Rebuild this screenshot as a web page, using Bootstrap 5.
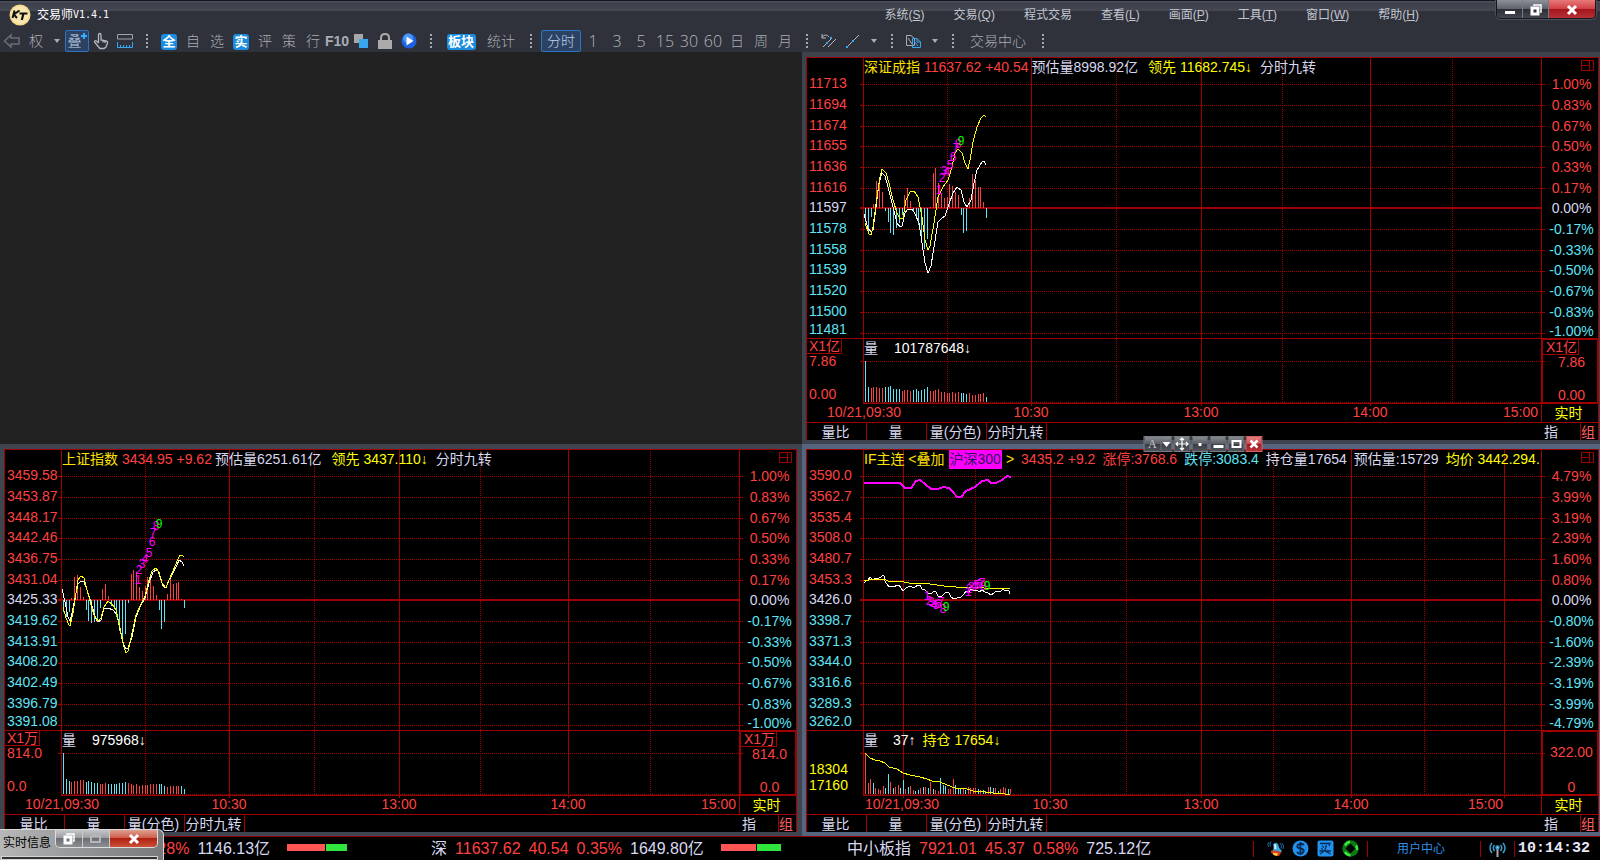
<!DOCTYPE html>
<html lang="zh-CN">
<head>
<meta charset="utf-8">
<meta name="viewport" content="width=device-width, initial-scale=1">
<title>交易师V1.4.1</title>
<link href="https://cdn.jsdelivr.net/npm/bootstrap@5.3.0/dist/css/bootstrap.min.css" rel="stylesheet">
<style>
:root{--line:#a00000;--up:#ff4040;--down:#5fe3f5;--pale:#d8d8f0;--gold:#ffe000;--lemon:#ffff00}
body{background:#222;color:var(--pale);font:14px/16px "Liberation Sans","Noto Sans CJK SC",sans-serif;overflow:hidden}
button{background:none;border:0;padding:0;color:inherit;font:inherit}
a{color:inherit;text-decoration:none}
.c-up{color:var(--up)}.c-down{color:var(--down)}.c-pale{color:var(--pale)}.c-gold{color:var(--gold)}.c-lemon{color:var(--lemon)}.c-white{color:#fff}

/* title bar and tool bar */
.app-head{background:linear-gradient(#14161e 0 1px,#4a4e58 1px 2px,#3e414b 3px,#454852 11px,#2f323b 11px);height:52px}
.title-row{height:30px;font-size:12px}
.title-row .ver{font:10px/16px "DejaVu Sans Mono",monospace}
.logo-box{padding-left:9px;gap:6px}
.menu-list{gap:29px;margin-right:77px;color:#c2c6d0}
.win-btns{margin-right:4px;border:1px solid #15171c;border-top:0;border-radius:0 0 5px 5px;box-shadow:0 0 0 1px #4c505a;overflow:hidden;height:19px}
.win-btns button{width:26px;height:19px;background:linear-gradient(#8d919a,#5c606a 48%,#2c2f37 50%,#454953);border-right:1px solid #777b85}
.win-btns .shut{width:46px;background:linear-gradient(#e8797a,#cf3d42 48%,#a5161c 50%,#b8343a);border:0}
.tool-row{height:22px;color:#a9adb5}
.tool-row button{width:24px;height:22px;font-weight:300}
.tool-row .wide{width:40px}.tool-row .caret{width:17px}
.tool-row .center-link{width:70px}
.tool-row .num{font:300 16px/22px "Open Sans","Liberation Sans",sans-serif;color:#b4b7be}
.tool-row .f-ten{font:700 14px/22px "Liberation Sans Narrow","Liberation Sans",sans-serif}
.tool-row .on{border:1px solid #2c74c4;background:#2b4265;border-radius:2px;color:#c6d4e6}
.tool-row .overlay-btn{padding-right:5px;text-align:center}
.chip{display:inline-block;background:#1b8de0;color:#fff;border-radius:3px;font-weight:700;line-height:16px;width:16px;font-size:13px}
.chip.two{width:29px}
.grip{width:20px;height:14px;background:repeating-linear-gradient(#a5a8b0 0 2px,transparent 2px 4px) center/2px 14px no-repeat}
.tool-row svg,.win-btns svg{display:block;margin:auto}
.tri{width:0;height:0;margin:auto;border:3px solid transparent;border-top:4px solid #a9adb5;border-bottom:0}

/* chart windows */
.desk{display:grid;grid-template-columns:minmax(0,802fr) minmax(0,798fr)}
.pane{height:392px;background:#000;border-style:solid;border-color:#40444e;border-width:5px 1px 4px 4px;box-shadow:inset 0 1px #000}
.pane.idle{border-color:#3d424d}
.pane.left-side{border-right-width:5px}
.pane.live{border-color:#56657f}
.sheet{border:1px solid var(--line);border-bottom:0;height:383px}
.scale-l,.scale-r{width:57px}
.marks{height:281px;border-bottom:1px solid var(--line)}
.marks div{line-height:21px;height:21px}
.marks div:nth-child(3n){height:20px}
.scale-l .marks{border-right:1px solid var(--line);padding:15px 0 0 2px}
.scale-l .marks div:last-child{line-height:16px;height:16px}
.scale-r .marks{padding:16px 0 0 3px;text-align:center}
.scale-r .marks div:last-child{line-height:18px;height:17px}
.vols{height:65px}
.vols div{line-height:14px}
.scale-l .vols{border-right:1px solid var(--line);padding-bottom:3px}
.scale-l .vols div{padding-left:2px}
.scale-l .vols.oi{justify-content:end!important}
.scale-l .vols.oi div{line-height:16px}
.scale-r .vols{border:1px solid var(--line);border-width:1px 1px 2px;text-align:center}
.scale-r .vols div:not(.unit){padding-left:3px}
.scale-r .vols.oi{padding-top:13px}
.unit{align-self:start;border:1px solid var(--line);border-width:0 1px 1px 0;height:15px;padding:0 1px 0 3px;white-space:nowrap}
.scale-r .marks,.scale-r .vols,.live-tag{border-left:1px solid var(--line)}
.scale-r .vols{border-left-width:2px}
.live-tag{height:18px;line-height:18px;text-align:center;padding-right:3px}
.plot{min-width:0}
.plot svg{display:block;width:100%;height:364px;overflow:visible}
.plot svg text{font-size:14px}
.plot svg .turn{font-size:12px}
.legend-line{left:0;right:0;overflow:hidden;white-space:nowrap;line-height:18px;height:19px}
.legend-top{top:0}.legend-vol{top:281px}
.legend-gap{gap:7px}
.est{margin-left:3px}.lead-val{margin-left:10px}
.tag-300{background:#f0f;color:#301060;padding:0 1px}
.tabs-row{border-top:1px solid var(--line);height:18px}
.tabs-row button{width:60px;line-height:16px;border-right:1px solid var(--line);white-space:nowrap;padding-right:2px}
.tabs-row .zhi{width:36px;border:0}
.tabs-row .zu{width:18px;border:0;border-left:1px solid var(--line);color:#ff6060;padding-right:4px}
.corner{right:4px;top:2px}
.float-bar{top:-13px;height:16px;gap:1px;z-index:3}
.float-bar button{width:17px;height:16px;background:linear-gradient(#85888e,#5c5f66 48%,#3a3d44 50%,#50535a);border:1px solid #777b82}
.float-bar .aa{width:29px;color:#c8cacf;font:12px/12px "Liberation Serif",serif}
.float-bar .shut{background:linear-gradient(#e87c80,#cf4a50 48%,#a1141c 50%,#b8343a);border-color:#c86468}
.float-bar svg{display:block;margin:auto}

/* status bar and message window */
.foot{height:24px;background:#000;border-top:1px solid #8c0000;font-size:16px;white-space:nowrap}
.quote{flex:0 0 26%;gap:8px;padding-left:15px}
.quote.last{flex:1 1 0}
.balance{height:7px;margin-left:9px;margin-bottom:3px;gap:1px}
.balance i{display:block;height:7px}
.r-up{background:#ff5454}.r-down{background:#2fe63c}
.cell{border-left:1px solid var(--line);height:16px}
.tray{width:114px;padding-left:13px}
.user-link{width:113px;padding-right:6px;font-size:12px;color:#2f8fe8}
.signal{width:34px}
.clock{font:bold 15px/16px "Liberation Mono",monospace;color:#e8e8f8;width:86px;padding-left:3px}
.msg-win{left:0;bottom:0;width:164px;height:31px;z-index:5;background:linear-gradient(100deg,#b8b8b8,#909294 55%,#77797c);border:1px solid #d8d8d8;border-left:0;border-bottom:0;border-radius:0 6px 0 0;color:#000;font-size:12px}
.msg-title{padding:5px 0 0 3px}
.msg-win .inner{left:1px;right:5px;bottom:0;height:4px;border:1px solid #d6d6d6;background:#333}
.msg-btns{border:1px solid #ddd;border-top:0;border-radius:0 0 5px 5px;overflow:hidden;height:18px;margin-right:5px}
.msg-btns button{width:27px;height:17px;background:linear-gradient(#c4c6c8,#9a9c9f 48%,#6b6e72 50%,#8b8e92);border-right:1px solid #ccc}
.msg-btns .shut{width:47px;background:linear-gradient(#e0a090,#cc5a48 48%,#b02010 50%,#cc5038);border:0}
.msg-btns svg{display:block;margin:auto}
</style>
</head>
<body>
<header class="app-head">
  <div class="title-row d-flex">
    <div class="logo-box d-flex align-items-center c-white">
      <svg width="22" height="22" viewBox="0 0 22 22"><circle cx="11" cy="11" r="10.5" fill="#f5d98c"/><circle cx="11" cy="11" r="9" fill="#f9e6ae"/><g fill="none" stroke="#111" stroke-width="2"><path d="M5.500 6.500 3.500 14M10.500 6.500 4.800 10.500 8 14"/><path d="M10.500 9.500H18.500M14.500 9.500 12.800 16" stroke-width="2.200"/></g></svg>
      <span class="d-flex align-items-center">交易师<span class="ver">V1.4.1</span></span>
    </div>
    <nav class="menu-list d-flex ms-auto align-items-center">
      <a href="#">系统(<u>S</u>)</a><a href="#">交易(<u>Q</u>)</a><a href="#">程式交易</a><a href="#">查看(<u>L</u>)</a><a href="#">画面(<u>P</u>)</a><a href="#">工具(<u>T</u>)</a><a href="#">窗口(<u>W</u>)</a><a href="#">帮助(<u>H</u>)</a>
    </nav>
    <div class="win-btns d-flex">
      <button type="button" aria-label="最小化"><svg width="14" height="14"><rect x="2" y="8" width="10" height="3" fill="#fff"/></svg></button>
      <button type="button" aria-label="还原"><svg width="14" height="14" fill="none" stroke="#fff" stroke-width="1.500"><path d="M5 3V2H12V9H11"/><rect x="3" y="5" width="6" height="6" stroke-width="3"/></svg></button>
      <button type="button" class="shut" aria-label="关闭"><svg width="14" height="12" stroke="#fff" stroke-width="3"><path d="M3 2 11 10M11 2 3 10"/></svg></button>
    </div>
  </div>
  <div class="tool-row d-flex align-items-center">
    <button type="button" aria-label="后退"><svg width="18" height="16" fill="none" stroke="#6a6e78" stroke-width="1.500"><path d="M1.500 8 8 2V5H16V11H8V14Z"/></svg></button>
    <button type="button">权</button>
    <button type="button" class="caret" aria-label="更多"><div class="tri"></div></button>
    <button type="button" class="on overlay-btn position-relative" aria-label="叠加">叠<svg class="position-absolute top-0 end-0" width="8" height="9" stroke="#35b0ff" stroke-width="2"><path d="M4 2V8M1 5H7"/></svg></button>
    <button type="button" aria-label="手型"><svg width="18" height="18" fill="none" stroke="#b4b8c0" stroke-width="1.300"><path d="M6.500 11V3Q6.500 1.500 7.700 1.500T9 3V8L14 9Q16 9.500 15.500 11L14 15 12 16.500H8L5 13 2.500 10Q2.500 8 4.500 9L6.500 11M11 8.500V10.500M13 9V11"/></svg></button>
    <button type="button" aria-label="标尺"><svg width="18" height="16" fill="none"><path d="M1.500 1.500H16.500V6H1.500Z" stroke="#a0a4ac"/><path d="M1.500 9V14.500H16.500V9M4.500 12V14M7.500 12V14M10.500 12V14M13.500 12V14" stroke="#35a8f0"/></svg></button>
    <div class="grip"></div>
    <button type="button"><span class="chip">全</span></button>
    <button type="button">自</button>
    <button type="button">选</button>
    <button type="button"><span class="chip">实</span></button>
    <button type="button">评</button>
    <button type="button">策</button>
    <button type="button">行</button>
    <button type="button" class="f-ten">F10</button>
    <button type="button" aria-label="窗口"><svg width="16" height="16"><path d="M1 1H10V10H1Z" fill="#a8a8a8"/><path d="M6 6H15V15H6Z" fill="#3aa6ee"/></svg></button>
    <button type="button" aria-label="锁定"><svg width="16" height="18"><path d="M4 9V6Q4 2 8 2T12 6V9" fill="none" stroke="#aaa" stroke-width="2"/><rect x="1" y="8" width="14" height="9" fill="#aaa"/></svg></button>
    <button type="button" aria-label="播放"><svg width="16" height="16"><circle cx="8" cy="8" r="7.500" fill="#1c62e0"/><circle cx="7" cy="5.500" r="5" fill="#4a94f4"/><path d="M5.500 3.500 12.500 8 5.500 12.500Z" fill="#fff"/></svg></button>
    <div class="grip"></div>
    <button type="button" class="wide"><span class="chip two">板块</span></button>
    <button type="button" class="wide">统计</button>
    <div class="grip"></div>
    <button type="button" class="wide on">分时</button>
    <button type="button" class="num">1</button><button type="button" class="num">3</button><button type="button" class="num">5</button><button type="button" class="num">15</button><button type="button" class="num">30</button><button type="button" class="num">60</button>
    <button type="button">日</button><button type="button">周</button><button type="button">月</button>
    <div class="grip"></div>
    <button type="button" aria-label="平行线"><svg width="18" height="16" fill="none" stroke="#b4b8c0"><path d="M2 1V5H6M2 4Q6 0 9 4M3 14 11 6M8 14 16 6"/><path d="M10 4H12V6H10ZM6 9H8V11H6Z" fill="#35a8f0" stroke="none"/></svg></button>
    <button type="button" aria-label="画线"><svg width="18" height="16"><path d="M3 14 15 2" stroke="#b4b8c0"/><path d="M2 13H4V15H2ZM8 7H10V9H8Z" fill="#35a8f0"/></svg></button>
    <button type="button" class="caret" aria-label="更多"><div class="tri"></div></button>
    <div class="grip"></div>
    <button type="button" aria-label="复制"><svg width="18" height="16" fill="none"><path d="M1.500 2.500H6L9.500 5.500V12.500H1.500ZM3 5 7 11" stroke="#a8acb4"/><path d="M7.500 5.500H12L15.500 9V14.500H7.500ZM12 5.500V9H15.500M9 8 13 13" stroke="#35a8f0"/></svg></button>
    <button type="button" class="caret" aria-label="更多"><div class="tri"></div></button>
    <div class="grip"></div>
    <button type="button" class="center-link">交易中心</button>
    <div class="grip"></div>
  </div>
</header>

<main class="desk">
  <div></div>

  <section class="pane idle">
    <div class="sheet">
      <div class="d-flex">
        <div class="scale-l">
          <div class="marks" data-marks="11713 11694 11674 11655 11636 11616 11597 11578 11558 11539 11520 11500 11481"></div>
          <div class="vols d-flex flex-column justify-content-between c-up"><div class="unit">X1亿</div><div class="mb-auto">7.86</div><div>0.00</div></div>
        </div>
        <div class="plot flex-fill position-relative">
          <svg data-chart="sz"></svg>
          <div class="legend-line legend-top position-absolute d-flex"><span class="c-gold">深证成指</span><span class="c-up ms-1">11637.62 +40.54</span><span class="est">预估量8998.92亿</span><span class="c-lemon lead-val">领先 11682.745↓</span><span class="ms-2">分时九转</span></div>
          <div class="legend-line legend-vol position-absolute d-flex gap-3"><span>量</span><span class="c-white">101787648↓</span></div>
        </div>
        <div class="scale-r position-relative">
          <svg class="corner position-absolute" width="13" height="11" fill="none" stroke="#a00000"><path d="M.5.5H12.500V10.500H.5ZM8.500.5V10.500M.5 5.500H8.500"/></svg>
          <div class="marks" data-marks="1.00% 0.83% 0.67% 0.50% 0.33% 0.17% 0.00% -0.17% -0.33% -0.50% -0.67% -0.83% -1.00%"></div>
          <div class="vols d-flex flex-column justify-content-between c-up"><div class="unit">X1亿</div><div class="mb-auto">7.86</div><div>0.00</div></div>
          <div class="live-tag c-lemon">实时</div>
        </div>
      </div>
      <div class="tabs-row d-flex"><button type="button">量比</button><button type="button">量</button><button type="button">量(分色)</button><button type="button">分时九转</button><button type="button" class="zhi ms-auto text-start">指</button><button type="button" class="zu">组</button></div>
    </div>
  </section>

  <section class="pane left-side">
    <div class="sheet">
      <div class="d-flex">
        <div class="scale-l">
          <div class="marks" data-marks="3459.58 3453.87 3448.17 3442.46 3436.75 3431.04 3425.33 3419.62 3413.91 3408.20 3402.49 3396.79 3391.08"></div>
          <div class="vols d-flex flex-column justify-content-between c-up"><div class="unit">X1万</div><div class="mb-auto">814.0</div><div>0.0</div></div>
        </div>
        <div class="plot flex-fill position-relative">
          <svg data-chart="sh"></svg>
          <div class="legend-line legend-top position-absolute d-flex"><span class="c-gold">上证指数</span><span class="c-up ms-1">3434.95 +9.62</span><span class="est">预估量6251.61亿</span><span class="c-lemon lead-val">领先 3437.110↓</span><span class="ms-2">分时九转</span></div>
          <div class="legend-line legend-vol position-absolute d-flex gap-3"><span>量</span><span class="c-white">975968↓</span></div>
        </div>
        <div class="scale-r position-relative">
          <svg class="corner position-absolute" width="13" height="11" fill="none" stroke="#a00000"><path d="M.5.5H12.500V10.500H.5ZM8.500.5V10.500M.5 5.500H8.500"/></svg>
          <div class="marks" data-marks="1.00% 0.83% 0.67% 0.50% 0.33% 0.17% 0.00% -0.17% -0.33% -0.50% -0.67% -0.83% -1.00%"></div>
          <div class="vols d-flex flex-column justify-content-between c-up"><div class="unit">X1万</div><div class="mb-auto">814.0</div><div>0.0</div></div>
          <div class="live-tag c-lemon">实时</div>
        </div>
      </div>
      <div class="tabs-row d-flex"><button type="button">量比</button><button type="button">量</button><button type="button">量(分色)</button><button type="button">分时九转</button><button type="button" class="zhi ms-auto text-start">指</button><button type="button" class="zu">组</button></div>
    </div>
  </section>

  <section class="pane live position-relative">
    <div class="float-bar d-flex position-absolute start-50 translate-middle-x">
      <button type="button" class="aa d-flex align-items-center" aria-label="字体"><span class="ps-1 pe-1 border-end border-secondary">A</span><svg width="8" height="5"><path d="M0 0H8L4 5Z" fill="#fff"/></svg></button>
      <button type="button" aria-label="移动"><svg width="15" height="14" fill="none" stroke="#fff" stroke-width="1.200"><path d="M7.500 1V13M1.500 7H13.500M5.500 3 7.500 1 9.500 3M5.500 11 7.500 13 9.500 11M3.500 5 1.500 7 3.500 9M11.500 5 13.500 7 11.500 9"/></svg></button>
      <button type="button" aria-label="缩小"><svg width="13" height="14"><rect x="5" y="6" width="3" height="3" fill="#fff"/></svg></button>
      <button type="button" aria-label="最小化"><svg width="13" height="14"><rect x="2" y="8" width="10" height="3" fill="#fff"/></svg></button>
      <button type="button" aria-label="最大化"><svg width="13" height="14"><rect x="3" y="4" width="8" height="6" fill="none" stroke="#fff" stroke-width="2"/></svg></button>
      <button type="button" class="shut" aria-label="关闭"><svg width="13" height="14" stroke="#fff" stroke-width="2.500"><path d="M3 3.500 10 10.500M10 3.500 3 10.500"/></svg></button>
    </div>
    <div class="sheet">
      <div class="d-flex">
        <div class="scale-l">
          <div class="marks" data-marks="3590.0 3562.7 3535.4 3508.0 3480.7 3453.3 3426.0 3398.7 3371.3 3344.0 3316.6 3289.3 3262.0"></div>
          <div class="vols oi d-flex flex-column c-lemon"><div>18304</div><div>17160</div></div>
        </div>
        <div class="plot flex-fill position-relative">
          <svg data-chart="if"></svg>
          <div class="legend-line legend-top legend-gap position-absolute d-flex"><span class="d-flex gap-1"><span class="c-gold">IF主连 &lt;叠加</span><span class="tag-300">沪深300</span><span class="c-gold">&gt;</span></span><span class="c-up">3435.2 +9.2</span><span class="c-up">涨停:3768.6</span><span class="c-down">跌停:3083.4</span><span>持仓量17654</span><span>预估量:15729</span><span class="c-lemon">均价 3442.294.</span></div>
          <div class="legend-line legend-vol legend-gap position-absolute d-flex"><span>量</span><span class="c-white ms-2">37↑</span><span class="c-lemon">持仓 17654↓</span></div>
        </div>
        <div class="scale-r position-relative">
          <svg class="corner position-absolute" width="13" height="11" fill="none" stroke="#a00000"><path d="M.5.5H12.500V10.500H.5ZM8.500.5V10.500M.5 5.500H8.500"/></svg>
          <div class="marks" data-marks="4.79% 3.99% 3.19% 2.39% 1.60% 0.80% 0.00% -0.80% -1.60% -2.39% -3.19% -3.99% -4.79%"></div>
          <div class="vols oi d-flex flex-column justify-content-between c-up"><div>322.00</div><div>0</div></div>
          <div class="live-tag c-lemon">实时</div>
        </div>
      </div>
      <div class="tabs-row d-flex"><button type="button">量比</button><button type="button">量</button><button type="button">量(分色)</button><button type="button">分时九转</button><button type="button" class="zhi ms-auto text-start">指</button><button type="button" class="zu">组</button></div>
    </div>
  </section>
</main>

<footer class="foot d-flex align-items-center">
  <div class="quote d-flex align-items-center"><span>沪</span><span class="c-up">3434.95</span><span class="c-up">9.62</span><span class="c-up">0.28%</span><span>1146.13亿</span><div class="balance d-flex"><i class="r-up" style="width:38px"></i><i class="r-down" style="width:21px"></i></div></div>
  <div class="quote d-flex align-items-center"><span>深</span><span class="c-up">11637.62</span><span class="c-up">40.54</span><span class="c-up">0.35%</span><span>1649.80亿</span><div class="balance d-flex"><i class="r-up" style="width:35px"></i><i class="r-down" style="width:24px"></i></div></div>
  <div class="quote last d-flex align-items-center"><span>中小板指</span><span class="c-up">7921.01</span><span class="c-up">45.37</span><span class="c-up">0.58%</span><span>725.12亿</span></div>
  <div class="cell tray d-flex align-items-center gap-2">
    <svg width="17" height="17" class="flex-shrink-0"><path d="M5 12Q7.500 8 6 4.500Q8 1.500 11 4Q11.500 8 15 11L12 14Z" fill="#3ba8dc"/><path d="M4 10.500Q9 10 14.500 12L12 16Q7 16 4 12.500Z" fill="#d8381c"/><path d="M6 12.500 11 13.500 10 16 6.500 15Z" fill="#ffd040"/><path d="M2 2Q0 4 1.500 7M4 1.500Q2 4 3.500 6.500M13 3Q15.500 5.500 14 8.500M15 3Q17.500 6 16 9" fill="none" stroke="#1d6ea8"/><path d="M8 4.500 8.500 9" stroke="#d8f4ff" stroke-width="2"/></svg>
    <svg width="17" height="17" class="flex-shrink-0"><circle cx="8.500" cy="8.500" r="8" fill="#2290ee"/><path d="M12 5Q8.500 2.500 6 5T8.500 8.500 11 12.500 5 12M8.500 2V15" fill="none" stroke="#062a52" stroke-width="1.800"/></svg>
    <svg width="17" height="17" class="flex-shrink-0"><rect x=".5" y=".5" width="16" height="16" rx="2" fill="#2290ee"/><path d="M3 3.500H13L12 6M5 6 7 7.500M4 8.500 6 9.500M2.500 11H14M9 5Q10 10 3 14M9 11.500 13.500 14" fill="none" stroke="#062a52" stroke-width="1.300"/></svg>
    <svg width="17" height="17" class="flex-shrink-0"><circle cx="8.500" cy="8.500" r="8.200" fill="#0b7a12"/><path d="M3 5.500A6.700 6.700 0 0 1 8 1.800M14 5.500A6.700 6.700 0 0 1 15 10M3 12A6.700 6.700 0 0 0 8.500 15.200" fill="none" stroke="#3ce644" stroke-width="2.400"/><path d="M8.500 3.500 13.500 8.500 8.500 13.500 3.500 8.500Z"/></svg>
  </div>
  <a href="#" class="cell user-link text-center">用户中心</a>
  <div class="cell signal d-flex justify-content-center"><svg width="17" height="17" fill="none" stroke="#38a0cc" stroke-width="1.500"><path d="M5.500 4Q3 6.500 5.500 10M11.500 4Q14 6.500 11.500 10M3 2Q-1 7 3 12M14 2Q18 7 14 12"/><path d="M8.500 7V16" stroke="#aaa" stroke-width="2"/><circle cx="8.500" cy="6.500" r="1.500" fill="#9cd8f0"/></svg></div>
  <div class="cell clock">10:14:32</div>
</footer>

<div class="msg-win position-absolute">
  <div class="d-flex"><span class="msg-title flex-fill">实时信息</span>
    <div class="msg-btns d-flex">
      <button type="button" aria-label="还原"><svg width="14" height="14" fill="none" stroke="#fff" stroke-width="1.500"><path d="M5 3V2H12V9H11"/><rect x="3" y="5" width="6" height="6" stroke-width="3"/></svg></button>
      <button type="button" aria-label="最大化"><svg width="14" height="12"><rect x="2" y="3" width="9" height="6" fill="none" stroke="#b4b6b8" stroke-width="2"/></svg></button>
      <button type="button" class="shut" aria-label="关闭"><svg width="14" height="12" stroke="#fff" stroke-width="3"><path d="M3 2 11 10M11 2 3 10"/></svg></button>
    </div>
  </div>
  <div class="inner position-absolute"></div>
</div>

<script src="https://cdn.jsdelivr.net/npm/bootstrap@5.3.0/dist/js/bootstrap.bundle.min.js"></script>
<script>
// Scale labels: above the previous close red, the close itself pale, below it cyan.
document.querySelectorAll('[data-marks]').forEach(function (box) {
  box.innerHTML = box.dataset.marks.split(' ').map(function (t, i) {
    return '<div class="' + (i < 6 ? 'c-up' : i === 6 ? 'c-pale' : 'c-down') + '">' + t + '</div>';
  }).join('');
});

// Horizontal values are on a 677-unit trading day, vertical values in chart pixels.
var DAY = 677, BASE = 150, FLOOR = 344;
var ROWS = [26, 47, 68, 88, 109, 130, 171, 192, 213, 233, 254, 275];
var dayGrid = { solid: [167, 337, 506], dotted: [83, 252, 418, 588],
  times: [[0, '10/21,09:30', 'middle'], [167, '10:30', 'middle'], [337, '13:00', 'middle'], [506, '14:00', 'middle'], [674, '15:00', 'end']] };
var charts = {
  sz: { grid: dayGrid, step: 2.814,
    hist: [-14,-23,-9,4,27,26,16,-3,-14,-25,-27,-20,-15,-7,13,20,7,-3,-9,-17,-29,-41,-31,1,35,40,25,15,10,11,24,22,16,13,-7,-25,-23,10,34,28,21,21,6,-10],
    vol: [41,15,14,15,15,14,14,15,15,16,13,13,13,11,12,12,11,12,13,11,12,13,15,11,11,12,13,10,10,9,9,10,9,10,9,9,8,9,7,7,8,8,9,5],
    tone: 'ccrrrrrccccccrrrrccccccrrrrrrrrrrrcccrrrrrrc',
    lines: [
      ['#fff', 1, '0,156 4,170 7,174 9,172 12,149 15,125 18,115 21,118 24,129 29,149 33,165 36,169 38,168 41,155 44,151 48,151 51,156 55,165 58,185 61,205 64,215 67,208 70,189 74,164 78,160 81,158 84,149 89,135 93,129 97,132 100,144 103,149 107,142 110,125 113,112 118,104 120,103 122,107'],
      ['#ff0', 1, '1,165 5,176 7,177 9,169 13,139 16,119 18,111 22,115 25,125 29,142 33,155 36,161 39,160 42,142 46,134 50,133 54,139 58,159 61,182 64,192 66,188 70,165 74,139 79,129 84,122 88,109 91,95 94,91 98,95 101,105 104,111 106,102 109,84 113,69 117,60 120,57 122,59']],
    turns: [[[75,132],[78,120],[80,113],[83,114],[86,107],[89,99],[92,90],[94,86],[97,83]]] },
  sh: { grid: dayGrid, step: 2.814,
    hist: [-12,-17,-12,2,23,25,13,3,-10,-21,-23,-22,-20,-8,11,16,4,-6,-8,-17,-31,-38,-34,-3,26,30,28,13,9,14,23,23,14,5,-10,-29,-22,6,24,16,17,18,1,-8],
    vol: [41,15,13,12,13,13,14,14,12,13,12,11,11,10,10,11,10,10,10,10,11,11,12,11,10,9,10,8,9,9,9,10,10,10,10,10,8,7,8,8,8,8,8,5],
    tone: 'cccrrrrrcccccrrrcccccccrrrrrrrrrrrcccrrrrrcc',
    lines: [
      ['#fff', 1, '0,139 3,152 6,167 8,171 10,163 13,148 16,134 19,131 22,132 25,140 29,152 33,167 36,172 39,170 42,158 46,158 51,160 55,165 58,180 61,193 64,199 66,198 70,187 74,167 78,157 83,148 87,133 91,122 94,120 96,121 99,130 101,136 104,138 106,132 110,125 115,115 117,110 120,112 122,116'],
      ['#ff0', 1, '1,157 4,168 7,175 8,176 11,163 14,143 16,130 19,126 22,128 24,136 28,151 32,165 36,171 39,168 42,157 46,151 50,154 54,160 58,178 62,197 64,203 66,201 69,188 74,165 78,156 83,146 87,130 90,121 94,118 97,122 100,133 104,138 107,130 111,121 116,109 118,105 120,105 122,107']],
    turns: [[[76,130],[77,120],[80,114],[83,109],[87,103],[90,92],[91,83],[94,76],[97,74]]] },
  'if': { grid: { solid: [39, 186, 337, 487, 640], dotted: [111, 262, 409, 560],
      times: [[1, '10/21,09:30', 'start'], [186, '10:30', 'middle'], [337, '13:00', 'middle'], [487, '14:00', 'middle'], [639, '15:00', 'end']] },
    step: 2.5, hist: [],
    vol: [41,11,15,11,6,5,4,8,6,20,12,6,7,9,6,14,5,7,8,4,3,4,6,7,7,6,12,5,4,3,16,9,8,5,5,15,9,6,5,5,4,7,6,6,6,5,4,4,3,7,7,6,6,3,5,7,6,5,5],
    tone: 'rrrcrrrrccrcrrccrcrrccrcrcrcrrcccrrrcccrcrrrrcrccrccrcrrrcrc',
    lines: [
      ['#f0f', 2, '0,33 36,33 41,38 47,38 52,31 56,30 61,34 67,39 74,39 79,37 85,38 89,42 93,47 97,47 102,41 111,37 118,31 124,30 127,33 132,33 138,30 143,26 147,27'],
      ['#fff', 1, '0,133 3,130 4,130 6,127 9,130 11,128 13,129 17,127 19,125 20,126 21,131 22,133 25,137 27,136 30,137 33,135 35,135 37,138 39,141 42,138 46,136 48,137 51,137 54,135 56,135 58,139 61,140 64,143 68,143 70,141 72,142 74,146 77,147 80,144 82,142 85,143 87,147 90,149 93,148 97,147 100,144 102,141 105,142 107,139 110,141 113,140 115,142 118,140 121,142 124,143 127,145 130,143 132,141 136,142 139,139 141,141 143,140 145,141 146,144'],
      ['#ff0', 1, '0,130 5,130 20,129 24,131 40,132 45,133 66,134 80,136 92,137 120,138 146,138'],
      ['#ff0', 1, '1,303 6,308 11,310 16,311 21,313 25,317 33,319 39,323 46,325 56,327 63,329 68,331 76,332 83,335 91,338 103,339 109,341 121,342 129,343 141,344 146,345']],
    turns: [[[63,146],[65,151],[67,152],[70,155],[72,155],[74,154],[77,152],[79,159],[82,157]],
            [[104,142],[105,139],[107,137],[110,136],[113,135],[115,134],[118,133],[119,136],[123,136]]] }
};
var RED = '#a00000', UP = '#ff4040', DOWN = '#5fe3f5';

function seg(x1, y1, x2, y2, color, more) {
  return '<line x1="' + x1 + '" y1="' + y1 + '" x2="' + x2 + '" y2="' + y2 + '" stroke="' + color + '" ' + (more || '') + '/>';
}
function draw(svg) {
  var c = charts[svg.dataset.chart], w = svg.clientWidth, k = w / DAY, out = '';
  var px = function (v) { return Math.round(v * k) + 0.5; };
  var dots = 'stroke-dasharray="1 1"';
  ROWS.concat([303]).forEach(function (y) {
    out += seg(0, y + .5, w, y + .5, RED, dots) + seg(-4, y + .5, 0, y + .5, RED) + seg(w, y + .5, w + 4, y + .5, RED);
  });
  out += seg(0, FLOOR + .5, w, FLOOR + .5, RED, dots);
  c.grid.dotted.forEach(function (x) { out += seg(px(x), 1, px(x), FLOOR, RED, dots); });
  c.grid.solid.forEach(function (x) { out += seg(px(x), 0, px(x), 348, RED); });
  out += seg(-4, BASE, w, BASE, RED, 'stroke-width="2"') + seg(0, 280.5, w, 280.5, RED) + seg(-1, 345.5, w, 345.5, RED);
  c.hist.forEach(function (h, i) {
    var x = px(1 + i * c.step); out += seg(x, BASE, x, BASE - h, h > 0 ? UP : DOWN);
  });
  c.vol.forEach(function (h, i) {
    var x = px(1 + i * c.step); out += seg(x, FLOOR, x, FLOOR - h, c.tone[i] === 'r' ? UP : DOWN);
  });
  c.lines.forEach(function (l) {
    var pts = l[2].split(' ').map(function (p) { p = p.split(','); return p[0] * k + ',' + p[1]; }).join(' ');
    out += '<polyline fill="none" stroke="' + l[0] + '" stroke-width="' + l[1] + '" points="' + pts + '"/>';
  });
  out = '<g shape-rendering="crispEdges">' + out + '</g>';
  c.turns.forEach(function (run) {
    run.forEach(function (p, i) {
      out += '<text class="turn" text-anchor="middle" x="' + p[0] * k + '" y="' + (p[1] + 4) + '" fill="' + (i === 8 ? '#0f0' : '#f0f') + '">' + (i + 1) + '</text>';
    });
  });
  c.grid.times.forEach(function (t) {
    out += '<text x="' + t[0] * k + '" y="359" text-anchor="' + t[2] + '" fill="' + UP + '">' + t[1] + '</text>';
  });
  svg.innerHTML = out;
}
function drawAll() { document.querySelectorAll('[data-chart]').forEach(draw); }
drawAll();
window.addEventListener('resize', drawAll);
</script>
</body>
</html>
